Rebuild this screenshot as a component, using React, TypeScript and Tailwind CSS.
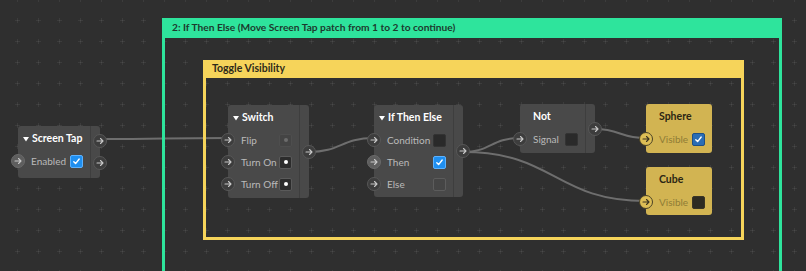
import React from "react";

type Val = "check" | "off" | "dark" | "dim" | "dotOn" | "dotOff" | "blueDark";

interface Row {
    label: string;
    value?: Val;
    lit?: boolean;
}

interface NodeProps {
    x: number;
    y: number;
    w: number;
    h: number;
    title: string;
    arrow?: boolean;
    rows: Row[];
    outputs?: number;
    gold?: boolean;
}

function Arrow({ dark }: { dark?: boolean }) {
    return (
        <svg width="8" height="8" viewBox="0 0 8 8" fill="none" stroke={dark ? "#3a3320" : "#c9c9c9"} strokeWidth="1.1" strokeLinecap="round" strokeLinejoin="round">
            <path d="M1 4h6M4.5 1.5 7 4 4.5 6.5" />
        </svg>
    );
}

function Port({ lit, gold }: { lit?: boolean; gold?: boolean }) {
    const tone = gold
        ? "bg-[#dcbd55] border-[#4a4226]"
        : lit
            ? "bg-[#5e5e5e] border-[#6a6a6a]"
            : "bg-[#3d3d3d] border-[#575757]";
    return (
        <div className={`flex h-[14px] w-[14px] shrink-0 items-center justify-center rounded-full border ${tone}`}>
            <Arrow dark={gold} />
        </div>
    );
}

function Value({ v }: { v: Val }) {
    if (v === "check" || v === "blueDark") {
        const bg = v === "check" ? "bg-[#1f8ff0] border-[#5cb2ff]" : "bg-[#2a6db5] border-[#1d4f86]";
        return (
            <div className={`flex h-[13px] w-[13px] items-center justify-center rounded-[2px] border ${bg}`}>
                <svg width="9" height="9" viewBox="0 0 9 9" fill="none" stroke="#fff" strokeWidth="1.4" strokeLinecap="round" strokeLinejoin="round">
                    <path d="M1.8 4.8 3.6 6.6 7.2 2" />
                </svg>
            </div>
        );
    }
    if (v === "dotOn" || v === "dotOff") {
        const box = v === "dotOn" ? "bg-[#2c2c2c] border-[#5a5a5a]" : "bg-[#444] border-[#4e4e4e]";
        const dot = v === "dotOn" ? "bg-white" : "bg-[#6c6c6c]";
        return (
            <div className={`flex h-[13px] w-[13px] items-center justify-center rounded-[2px] border ${box}`}>
                <div className={`h-[4px] w-[4px] rounded-full ${dot}`} />
            </div>
        );
    }
    const cls =
        v === "dark"
            ? "bg-[#2a2a2a] border-[#333]"
            : v === "dim"
                ? "bg-[#454545] border-[#5c5c5c]"
                : "bg-[#2e2b22] border-[#3a3526]";
    return <div className={`h-[13px] w-[13px] rounded-[2px] border ${cls}`} />;
}

function Node({ x, y, w, h, title, arrow, rows, outputs = 0, gold }: NodeProps) {
    return (
        <div
            className={`absolute flex rounded-[3px] ${gold ? "bg-[#d2b452]" : "bg-[#494949]"}`}
            style={{ left: x, top: y, width: w, height: h }}
        >
            <div className="flex flex-1 flex-col pt-[2px]">
                <div className={`flex h-[22px] items-center whitespace-nowrap font-bold text-[10.5px] ${gold ? "text-[#2b2614]" : "text-white"} ${arrow ? "pl-[5px]" : "pl-[13px]"}`}>
                    {arrow && (
                        <svg width="6" height="5" viewBox="0 0 6 5" className="mr-[3px]">
                            <polygon points="0,0 6,0 3,4.5" fill="#fff" />
                        </svg>
                    )}
                    <span>{title}</span>
                </div>
                {rows.map((r) => (
                    <div key={r.label} className="flex h-[22px] items-center">
                        <div className="-ml-[7px]">
                            <Port lit={r.lit} gold={gold} />
                        </div>
                        <span className={`ml-[6px] whitespace-nowrap text-[10px] ${gold ? "text-[#8f7c36]" : "text-[#bababa]"}`}>{r.label}</span>
                        {r.value && (
                            <div className="ml-auto mr-[7px] shrink-0">
                                <Value v={r.value} />
                            </div>
                        )}
                    </div>
                ))}
            </div>
            {outputs > 0 && (
                <div className="flex w-[10px] flex-col justify-center gap-[8px] border-l border-[#3e3e3e]">
                    {Array.from({ length: outputs }).map((_, i) => (
                        <div key={i} className="ml-[2px]">
                            <Port />
                        </div>
                    ))}
                </div>
            )}
        </div>
    );
}

function Grid() {
    return (
        <svg className="absolute inset-0" width="806" height="271">
            <defs>
                <pattern id="dots" x="7" y="10" width="21" height="21" patternUnits="userSpaceOnUse">
                    <rect x="8" y="10" width="5" height="1" fill="#3c3c3c" />
                    <rect x="10" y="8" width="1" height="5" fill="#3c3c3c" />
                    <rect x="10" y="10" width="1" height="1" fill="#4a4a4a" />
                </pattern>
            </defs>
            <rect width="806" height="271" fill="url(#dots)" />
        </svg>
    );
}

function Wires() {
    const wires = [
        "M100 139 C164 139 164 138 228 138",
        "M309 152 C341 152 341 138 374 138",
        "M463 152 C491 152 491 138 520 138",
        "M463 152 C555 152 555 201 646 201",
        "M595 129 C620 129 620 138 646 138",
    ];
    return (
        <svg className="absolute inset-0" width="806" height="271" fill="none">
            {wires.map((d) => (
                <path key={d} d={d} stroke="#6e6e6e" strokeWidth="2" />
            ))}
        </svg>
    );
}

export default function App() {
    return (
        <div className="relative h-[271px] w-[806px] overflow-hidden bg-[#2f2f2f] font-['Lato','Liberation_Sans',sans-serif]">
            <Grid />
            <Wires />

            {/* Group frames */}
            <div className="absolute left-[162px] top-[18px] h-[280px] w-[620px] border-[3px] border-t-0 border-[#2ee49c]">
                <div className="flex h-[20px] items-center bg-[#2ee49c] pl-[7px] text-[10.2px] font-bold text-[#1d3a2e]">
                    2: If Then Else (Move Screen Tap patch from 1 to 2 to continue)
                </div>
            </div>
            <div className="absolute left-[203px] top-[60px] h-[180px] w-[541px] border-[3px] border-t-0 border-[#f6d45a]">
                <div className="flex h-[18px] items-center bg-[#f6d45a] pl-[6px] text-[10.5px] font-bold text-[#2e2a1a]">
                    Toggle Visibility
                </div>
            </div>

            <Node x={18} y={126} w={82} h={52} title="Screen Tap" arrow outputs={2}
                rows={[{ label: "Enabled", value: "check", lit: true }]} />
            <Node x={228} y={105} w={81} h={93} title="Switch" arrow outputs={1}
                rows={[
                    { label: "Flip", value: "dotOff" },
                    { label: "Turn On", value: "dotOn" },
                    { label: "Turn Off", value: "dotOn" },
                ]} />
            <Node x={374} y={105} w={89} h={92} title="If Then Else" arrow outputs={1}
                rows={[
                    { label: "Condition", value: "dark" },
                    { label: "Then", value: "check", lit: true },
                    { label: "Else", value: "dim" },
                ]} />
            <Node x={520} y={104} w={75} h={49} title="Not" outputs={1}
                rows={[{ label: "Signal", value: "dark" }]} />
            <Node x={646} y={104} w={66} h={49} title="Sphere" gold
                rows={[{ label: "Visible", value: "blueDark" }]} />
            <Node x={646} y={167} w={66} h={48} title="Cube" gold
                rows={[{ label: "Visible", value: "off" }]} />
        </div>
    );
}
